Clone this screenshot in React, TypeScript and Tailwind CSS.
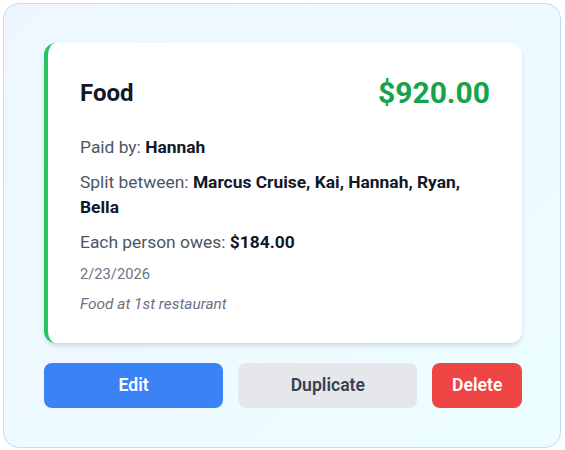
export default function App() {
  return (
    <div className="w-[565px] h-[450px] bg-white pl-[3px] pt-[3px]" style={{ fontFamily: 'Roboto, "Liberation Sans", sans-serif' }}>
      <div className="w-[558px] h-[445px] rounded-2xl border border-[#bfdbfe] bg-gradient-to-br from-[#eff6ff] to-[#ecfeff] pl-10 pr-[38px] pt-[39px]">
        <div className="rounded-xl border-l-4 border-[#22c55e] bg-white shadow-md p-8 pb-[28px]">
          <div className="flex items-center justify-between mb-6">
            <h2 className="text-2xl font-bold text-[#111827]">Food</h2>
            <span className="text-3xl font-bold text-[#16a34a]">$920.00</span>
          </div>
          <div className="flex flex-col gap-[10px] text-[17.4px] leading-[25px] text-[#4b5563]">
            <p>Paid by: <span className="font-bold text-[#111827]">Hannah</span></p>
            <p>Split between: <span className="font-bold text-[#111827]">Marcus Cruise, Kai, Hannah, Ryan, Bella</span></p>
            <p>Each person owes: <span className="font-bold text-[#111827]">$184.00</span></p>
          </div>
          <p className="mt-[8px] text-[14.7px] leading-[22px] text-[#6b7280]">2/23/2026</p>
          <p className="mt-2 text-[15.4px] leading-[22px] italic text-[#6b7280]">Food at 1st restaurant</p>
        </div>
        <div className="mt-5 flex gap-[15px]">
          <button className="flex-[2] rounded-lg bg-[#3b82f6] h-[45px] text-[17.6px] font-semibold text-white">Edit</button>
          <button className="flex-[2] rounded-lg bg-[#e5e7eb] h-[45px] text-[17.6px] font-semibold text-[#374151]">Duplicate</button>
          <button className="flex-1 rounded-lg bg-[#ef4444] h-[45px] text-[17.6px] font-semibold text-white">Delete</button>
        </div>
      </div>
    </div>
  );
}
